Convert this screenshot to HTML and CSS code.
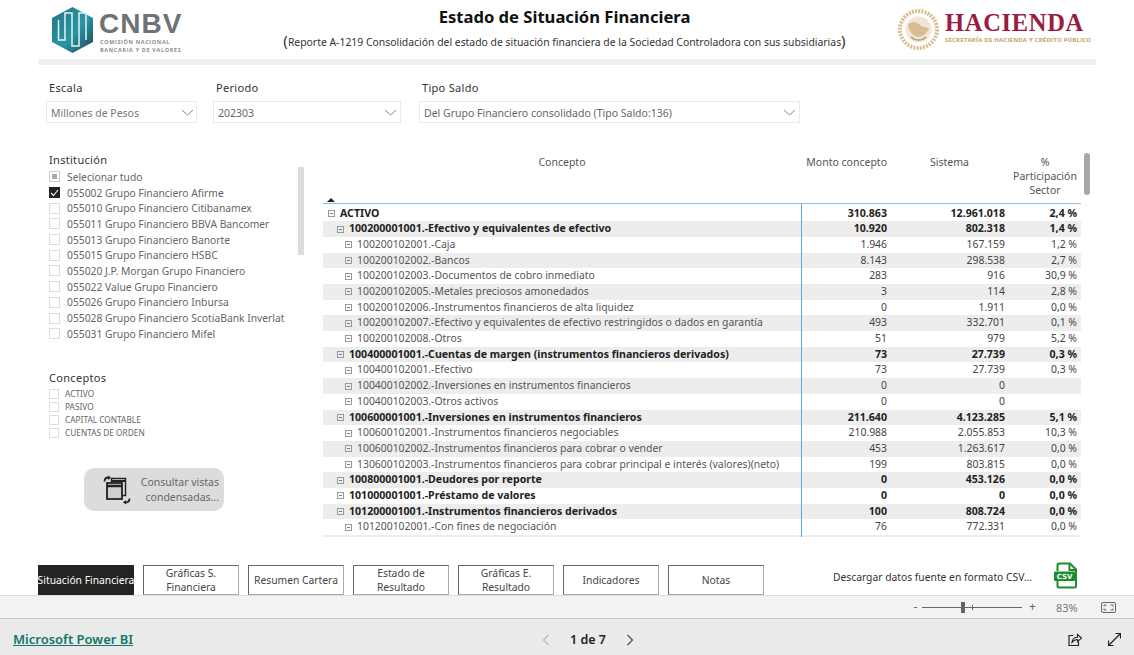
FILE: index.html
```html
<!DOCTYPE html>
<html lang="es">
<head>
<meta charset="utf-8">
<title>Estado de Situación Financiera</title>
<link rel="stylesheet" href="styles.css">
</head>
<body>
<div class="report">
  <header class="header">
    <div class="cnbv">
      <svg class="cnbv-mark" width="41" height="46" viewBox="0 0 41 46">
        <defs><linearGradient id="tg" x1="0" y1="0" x2="1" y2="1"><stop offset="0" stop-color="#23737f"/><stop offset="0.55" stop-color="#2a96a5"/><stop offset="1" stop-color="#1b4555"/></linearGradient></defs>
        <path d="M20.500 0 41 11V35L20.500 46 0 35V11Z" fill="url(#tg)"/>
        <path d="M6.500 13V33H13V6H20V39H27V6H34V33" fill="none" stroke="#e6f3f5" stroke-width="1.500"/>
      </svg>
      <div class="cnbv-text">
        <div class="cnbv-name">CNBV</div>
        <div class="cnbv-sub">COMISIÓN NACIONAL<br>BANCARIA Y DE VALORES</div>
      </div>
    </div>
    <div class="title-block">
      <h1 class="title">Estado de Situación Financiera</h1>
      <p class="subtitle"><span class="paren">(</span>Reporte A-1219 Consolidación del estado de situación financiera de la Sociedad Controladora con sus subsidiarias<span class="paren">)</span></p>
    </div>
    <div class="hacienda">
      <svg width="41" height="41" viewBox="0 0 41 41">
        <circle cx="20.500" cy="20.500" r="18.500" fill="none" stroke="#d9bd92" stroke-width="4" stroke-dasharray="2 1.200"/>
        <circle cx="20.500" cy="20.500" r="13" fill="#f1e6d4"/>
        <path d="M10 16c4-5 9-3 12 0s7 1 9 4c-3 5-7 8-11 8s-9-5-10-12Z" fill="#d9bd92"/>
        <path d="M13 28c4 4 11 4 15 0" fill="none" stroke="#b9a070" stroke-width="1.500"/>
      </svg>
      <div class="hac-text">
        <div class="hac-name">HACIENDA</div>
        <div class="hac-sub">SECRETARÍA DE HACIENDA Y CRÉDITO PÚBLICO</div>
      </div>
    </div>
  </header>
  <div class="rule"></div>

  <section class="slicers">
    <div class="slicer s-escala">
      <label class="slabel">Escala</label>
      <div class="dropdown"><span>Millones de Pesos</span><svg class="chev" width="13" height="7" viewBox="0 0 13 7"><path d="M1 1l5.500 5L12 1" fill="none" stroke="#888" stroke-width="1"/></svg></div>
    </div>
    <div class="slicer s-periodo">
      <label class="slabel">Periodo</label>
      <div class="dropdown dark"><span>202303</span><svg class="chev" width="13" height="7" viewBox="0 0 13 7"><path d="M1 1l5.500 5L12 1" fill="none" stroke="#888" stroke-width="1"/></svg></div>
    </div>
    <div class="slicer s-tipo">
      <label class="slabel">Tipo Saldo</label>
      <div class="dropdown dark"><span>Del Grupo Financiero consolidado (Tipo Saldo:136)</span><svg class="chev" width="13" height="7" viewBox="0 0 13 7"><path d="M1 1l5.500 5L12 1" fill="none" stroke="#888" stroke-width="1"/></svg></div>
    </div>
  </section>

  <main class="main">
    <aside class="side">
      <div class="inst">
        <div class="slabel">Institución</div>
        <ul class="checks">
          <li><span class="box partial"></span>Selecionar tudo</li>
          <li><span class="box checked"><svg width="11" height="11" viewBox="0 0 11 11"><path d="M2 6l2.500 2.500L9 3" fill="none" stroke="#fff" stroke-width="1.100"/></svg></span>055002 Grupo Financiero Afirme</li>
          <li><span class="box"></span>055010 Grupo Financiero Citibanamex</li>
          <li><span class="box"></span>055011 Grupo Financiero BBVA Bancomer</li>
          <li><span class="box"></span>055013 Grupo Financiero Banorte</li>
          <li><span class="box"></span>055015 Grupo Financiero HSBC</li>
          <li><span class="box"></span>055020 J.P. Morgan Grupo Financiero</li>
          <li><span class="box"></span>055022 Value Grupo Financiero</li>
          <li><span class="box"></span>055026 Grupo Financiero Inbursa</li>
          <li><span class="box"></span>055028 Grupo Financiero ScotiaBank Inverlat</li>
          <li><span class="box"></span>055031 Grupo Financiero Mifel</li>
        </ul>
        <div class="side-scroll"></div>
      </div>
      <div class="conceptos">
        <div class="slabel">Conceptos</div>
        <ul class="checks small">
          <li><span class="box"></span>ACTIVO</li>
          <li><span class="box"></span>PASIVO</li>
          <li><span class="box"></span>CAPITAL CONTABLE</li>
          <li><span class="box"></span>CUENTAS DE ORDEN</li>
        </ul>
      </div>
      <button class="consult">
        <svg width="32" height="32" viewBox="0 0 32 32">
          <path d="M7.500 3.500C5 3.500 3.500 5 3.500 7.500" fill="none" stroke="#222" stroke-width="1.800"/>
          <path d="M7 1.500v4.500l3-2.200Z" fill="#222"/>
          <path d="M24.500 28.500c2.500 0 4-1.500 4-4" fill="none" stroke="#222" stroke-width="1.800"/>
          <path d="M25 30.500V26l-3 2.200Z" fill="#222"/>
          <rect x="10.500" y="4.500" width="14" height="17" fill="#ddd" stroke="#222" stroke-width="1.500"/>
          <path d="M10.500 7h14" stroke="#222" stroke-width="2"/>
          <rect x="6" y="9" width="15" height="16" fill="#cfcfcf" stroke="#222" stroke-width="1.800"/>
          <path d="M6 12h15" stroke="#222" stroke-width="2.500"/>
        </svg>
        <span>Consultar vistas<br>condensadas...</span>
      </button>
    </aside>

    <div class="matrix">
      <div class="mhead">
        <div class="h-concept">Concepto</div>
        <div class="h-num h-monto">Monto concepto</div>
        <div class="h-num h-sistema">Sistema</div>
        <div class="h-num h-pct">%<br>Participación<br>Sector</div>
        <svg class="sort" width="8" height="4" viewBox="0 0 8 4"><path d="M4 0l4 4H0Z" fill="#222"/></svg>
      </div>
      <div class="mbody">
        <div class="row b l0"><span class="c"><i class="tg"></i>ACTIVO</span><span>310.863</span><span>12.961.018</span><span>2,4 %</span></div>
        <div class="row b l1 z"><span class="c"><i class="tg"></i>100200001001.-Efectivo y equivalentes de efectivo</span><span>10.920</span><span>802.318</span><span>1,4 %</span></div>
        <div class="row l2"><span class="c"><i class="tg"></i>100200102001.-Caja</span><span>1.946</span><span>167.159</span><span>1,2 %</span></div>
        <div class="row l2 z"><span class="c"><i class="tg"></i>100200102002.-Bancos</span><span>8.143</span><span>298.538</span><span>2,7 %</span></div>
        <div class="row l2"><span class="c"><i class="tg"></i>100200102003.-Documentos de cobro inmediato</span><span>283</span><span>916</span><span>30,9 %</span></div>
        <div class="row l2 z"><span class="c"><i class="tg"></i>100200102005.-Metales preciosos amonedados</span><span>3</span><span>114</span><span>2,8 %</span></div>
        <div class="row l2"><span class="c"><i class="tg"></i>100200102006.-Instrumentos financieros de alta liquidez</span><span>0</span><span>1.911</span><span>0,0 %</span></div>
        <div class="row l2 z"><span class="c"><i class="tg"></i>100200102007.-Efectivo y equivalentes de efectivo restringidos o dados en garantía</span><span>493</span><span>332.701</span><span>0,1 %</span></div>
        <div class="row l2"><span class="c"><i class="tg"></i>100200102008.-Otros</span><span>51</span><span>979</span><span>5,2 %</span></div>
        <div class="row b l1 z"><span class="c"><i class="tg"></i>100400001001.-Cuentas de margen (instrumentos financieros derivados)</span><span>73</span><span>27.739</span><span>0,3 %</span></div>
        <div class="row l2"><span class="c"><i class="tg"></i>100400102001.-Efectivo</span><span>73</span><span>27.739</span><span>0,3 %</span></div>
        <div class="row l2 z"><span class="c"><i class="tg"></i>100400102002.-Inversiones en instrumentos financieros</span><span>0</span><span>0</span><span></span></div>
        <div class="row l2"><span class="c"><i class="tg"></i>100400102003.-Otros activos</span><span>0</span><span>0</span><span></span></div>
        <div class="row b l1 z"><span class="c"><i class="tg"></i>100600001001.-Inversiones en instrumentos financieros</span><span>211.640</span><span>4.123.285</span><span>5,1 %</span></div>
        <div class="row l2"><span class="c"><i class="tg"></i>100600102001.-Instrumentos financieros negociables</span><span>210.988</span><span>2.055.853</span><span>10,3 %</span></div>
        <div class="row l2 z"><span class="c"><i class="tg"></i>100600102002.-Instrumentos financieros para cobrar o vender</span><span>453</span><span>1.263.617</span><span>0,0 %</span></div>
        <div class="row l2"><span class="c"><i class="tg"></i>130600102003.-Instrumentos financieros para cobrar principal e interés (valores)(neto)</span><span>199</span><span>803.815</span><span>0,0 %</span></div>
        <div class="row b l1 z"><span class="c"><i class="tg"></i>100800001001.-Deudores por reporte</span><span>0</span><span>453.126</span><span>0,0 %</span></div>
        <div class="row b l1"><span class="c"><i class="tg"></i>101000001001.-Préstamo de valores</span><span>0</span><span>0</span><span>0,0 %</span></div>
        <div class="row b l1 z"><span class="c"><i class="tg"></i>101200001001.-Instrumentos financieros derivados</span><span>100</span><span>808.724</span><span>0,0 %</span></div>
        <div class="row l2"><span class="c"><i class="tg"></i>101200102001.-Con fines de negociación</span><span>76</span><span>772.331</span><span>0,0 %</span></div>
        <div class="row-cut"></div>
        <div class="vline"></div>
      </div>
      <div class="matrix-scroll"></div>
    </div>
  </main>

  <nav class="tabs">
    <a class="tab active">Situación Financiera</a>
    <a class="tab">Gráficas S. Financiera</a>
    <a class="tab">Resumen Cartera</a>
    <a class="tab">Estado de Resultado</a>
    <a class="tab">Gráficas E. Resultado</a>
    <a class="tab">Indicadores</a>
    <a class="tab">Notas</a>
    <span class="download">Descargar datos fuente en formato CSV...</span>
    <svg class="csv" width="25" height="27" viewBox="0 0 25 27">
      <path d="M4.500 9V3a1.500 1.500 0 0 1 1.500-1.500h11l6 6V24a1.500 1.500 0 0 1-1.500 1.500H6A1.500 1.500 0 0 1 4.500 24V19" fill="#fff" stroke="#1e8c2e" stroke-width="2"/>
      <path d="M16.500 1.500V8h6.500" fill="none" stroke="#1e8c2e" stroke-width="2"/>
      <rect x="1" y="9.500" width="21" height="9.500" rx="1" fill="#1e8c2e"/>
      <text x="11.500" y="17.300" class="csv-t">CSV</text>
    </svg>
  </nav>
</div>

<div class="zoombar">
  <span class="zbtn">-</span>
  <div class="slider"><i class="notch"></i><i class="thumb"></i></div>
  <span class="zbtn">+</span>
  <span class="zpct">83%</span>
  <svg class="fit" width="15" height="11" viewBox="0 0 15 11"><rect x="0.500" y="0.500" width="14" height="10" rx="1.500" fill="none" stroke="#666"/><path d="M3 4.500V3h2.500M12 4.500V3H9.500M3 6.500V8h2.500M12 6.500V8H9.500" fill="none" stroke="#666"/></svg>
</div>

<footer class="footer">
  <a class="pbi">Microsoft Power BI</a>
  <div class="pager">
    <svg width="8" height="12" viewBox="0 0 8 12"><path d="M6.500 1 1.500 6l5 5" fill="none" stroke="#bbb" stroke-width="1.300"/></svg>
    <span class="pages">1 de 7</span>
    <svg width="8" height="12" viewBox="0 0 8 12"><path d="M1.500 1l5 5-5 5" fill="none" stroke="#555" stroke-width="1.300"/></svg>
  </div>
  <div class="actions">
    <svg width="14" height="13" viewBox="0 0 14 13"><path d="M5 2.500H1v10h9.500V8.500" fill="none" stroke="#222" stroke-width="1.200"/><path d="M4 9.500c0-4 3-5.300 5.500-5.300V1.500l4 3.600-4 3.500V6.500C7.500 6.500 5.500 7.500 4 9.500Z" fill="none" stroke="#222" stroke-width="1.100"/></svg>
    <svg width="13" height="13" viewBox="0 0 13 13"><path d="M.5 12.500l12-12M7.500.5h5v5M.5 7.500v5h5" fill="none" stroke="#222" stroke-width="1.200"/></svg>
  </div>
</footer>
</body>
</html>
```

FILE: styles.css
```css
* { box-sizing: border-box; }
html, body { margin: 0; padding: 0; }
body {
  width: 1134px; height: 655px; overflow: hidden; background: #fff;
  font-family: "Noto Sans", "Open Sans", sans-serif; color: #555;
  display: flex; flex-direction: column;
}
.report { height: 595px; padding: 0 38px; display: flex; flex-direction: column; flex: none; }

.header { height: 59px; display: flex; flex: none; position: relative; }
.cnbv { width: 180px; padding: 7px 0 0 14px; display: flex; gap: 7px; flex: none; }
.cnbv-text { padding-top: 3px; }
.cnbv-name { font: 800 28px/27px "Liberation Sans", sans-serif; font-weight: 700; color: #707274; letter-spacing: 1px; margin-left: -1px; }
.cnbv-sub { font: 700 5.400px/7.500px "Open Sans", sans-serif; color: #8a8c8e; margin-top: 2px; letter-spacing: 0.7px; white-space: nowrap; }
.title-block { flex: 1; text-align: center; padding: 6px 0 0 13px; }
.title { margin: 0; font: 700 16.600px/22px "Noto Sans", sans-serif; color: #111; }
.subtitle { margin: 2px 0 0; font: 400 10.400px/20px "Noto Sans", sans-serif; color: #333; white-space: nowrap; }
.paren { font-size: 15px; color: #333; }
.hacienda { width: 198px; display: flex; gap: 6px; padding: 9px 0 0 0; flex: none; }
.hac-name { font: 700 24.500px/24px "Liberation Serif", serif; color: #9b1b42; letter-spacing: 0.7px; margin-top: 2px; white-space: nowrap; }
.hac-sub { font: 700 6px/7px "Open Sans", sans-serif; color: #c5a06a; letter-spacing: 0.2px; white-space: nowrap; margin-top: 2px; }
.rule { height: 6px; background: #efefef; flex: none; width: 1058px; }

.slicers { display: flex; height: 88px; padding-top: 15px; flex: none; }
.slicer { display: flex; flex-direction: column; }
.s-escala { margin-left: 8px; width: 151px; }
.s-periodo { margin-left: 16px; width: 188px; }
.s-tipo { margin-left: 18px; width: 381px; }
.slabel { font: 400 11px/16px "Noto Sans", sans-serif; color: #333; letter-spacing: 0.3px; padding-left: 3px; height: 16px; }
.dropdown { margin-top: 5px; height: 22px; border: 1px solid #eaeaea; display: flex; align-items: center; justify-content: space-between; padding: 1px 2px 0 4px; font-size: 10.500px; color: #777; }
.dropdown.dark { color: #666; padding-right: 3px; }

.main { display: flex; height: 385px; flex: none; }
.side { width: 285px; flex: none; display: flex; flex-direction: column; padding-left: 11px; }
.inst { position: relative; height: 198px; }
.inst .slabel { padding-left: 0; margin-top: -1px; }
.checks { list-style: none; margin: 1px 0 0; padding: 0; }
.checks li { display: flex; align-items: center; height: 15.700px; font-size: 10.300px; color: #666; white-space: nowrap; gap: 7px; }
.box { width: 11px; height: 11px; border: 1px solid #ddd; flex: none; display: flex; align-items: center; justify-content: center; background: #fff; }
.box.partial { border-color: #ccc; }
.box.partial::after { content: ""; width: 5px; height: 5px; background: #aaa; }
.box.checked { background: #222; border-color: #222; }
.box.checked svg { flex: none; }
.side-scroll { position: absolute; left: 249px; top: 14px; width: 6px; height: 88px; background: #dcdcdc; }
.conceptos { margin-top: 19px; }
.conceptos .slabel { padding-left: 0; }
.checks.small { margin-top: 1px; }
.checks.small li { height: 13px; font-size: 8.300px; gap: 6px; color: #666; }
.checks.small .box { width: 10px; height: 10px; }
.consult { margin: 29px 0 0 35px; width: 140px; height: 43px; border: 0; border-radius: 10px; background: #dcdcdc; display: flex; align-items: center; padding: 0 5px 0 17px; font: 400 10.500px/14.500px "Noto Sans", sans-serif; color: #666; text-align: right; }
.consult span { flex: 1; white-space: nowrap; }

.matrix { position: relative; width: 773px; flex: none; }
.mhead { position: relative; height: 51px; border-bottom: 1px solid #8cc0ec; display: flex; width: 758px; font-size: 10.500px; color: #555; line-height: 14px; }
.h-concept { width: 478px; text-align: center; padding: 2px 0 0 0; }
.h-num { text-align: right; padding-top: 2px; }
.h-monto { width: 86px; padding-right: 0; white-space: nowrap; }
.h-sistema { width: 82px; text-align: right; }
.h-pct { width: 110px; flex: none; padding-right: 1px; text-align: center; padding-left: 43px; }
.sort { position: absolute; left: 4px; bottom: 1px; }
.mbody { position: relative; width: 758px; padding-top: 1.600px; height: 334px; overflow: hidden; }
.row { display: grid; grid-template-columns: 478px 86px 118px 72px; height: 15.700px; line-height: 15.700px; font-size: 10.400px; color: #444; white-space: nowrap; }
.row > span:not(.c) { text-align: right; }
.row.z { background: #ededed; }
.row.b { font-weight: 700; color: #222; font-size: 10.600px; }
.row-cut { height: 2px; background: #ededed; }
.c { display: flex; align-items: center; overflow: hidden; }
.l0 .c { padding-left: 5px; }
.l1 .c { padding-left: 14px; }
.l2 .c { padding-left: 22px; color: #555; }
.tg { width: 7px; height: 7px; border: 1px solid #999; margin-right: 5px; flex: none; position: relative; display: block; }
.tg::after { content: ""; position: absolute; left: 1px; top: 2px; width: 3px; height: 1px; background: #777; }
.vline { position: absolute; left: 478px; top: 0; height: 333px; width: 1px; background: #5aa5ea; }
.matrix-scroll { position: absolute; left: 761px; top: 0; width: 6px; height: 42px; border-radius: 3px; background: #a8a8a8; }

.tabs { display: flex; align-items: flex-start; height: 30px; margin-top: 27px; flex: none; }
.tab { width: 96px; height: 30px; border: 1px solid #666; border-right-color: #aaa; border-bottom-color: #aaa; margin-right: 9px; display: flex; align-items: center; justify-content: center; text-align: center; font-size: 10.300px; line-height: 14px; color: #444; padding: 0 5px; flex: none; }
.tab:nth-child(2), .tab:nth-child(4), .tab:nth-child(5) { padding: 0 14px; }
.tab.active { background: #252423; color: #fff; border: 0; padding: 0; white-space: nowrap; }
.download { font-size: 10.300px; color: #333; margin-left: 60px; line-height: 24px; white-space: nowrap; flex: none; }
.csv { margin: -3px 0 0 21px; flex: none; }
.csv-t { font: 700 7px "DejaVu Sans", sans-serif; fill: #fff; text-anchor: middle; }

.zoombar { height: 24px; flex: none; background: #f3f3f3; border-top: 1px solid #ddd; border-bottom: 1px solid #c9c9c9; display: flex; align-items: center; padding-left: 912px; color: #666; font-size: 11px; }
.zbtn { width: 7px; text-align: center; font-size: 12px; line-height: 12px; }
.slider { position: relative; width: 100px; height: 1px; background: #666; margin: 0 7px 0 3px; }
.thumb { position: absolute; left: 39px; top: -5px; width: 4px; height: 11px; background: #666; }
.notch { position: absolute; left: 50px; top: -2px; width: 1px; height: 5px; background: #666; }
.zpct { margin-left: 20px; width: 24px; font-size: 11px; color: #777; }
.fit { margin-left: 21px; }

.footer { flex: 1; background: #eaeaea; display: flex; align-items: center; position: relative; padding: 3px 0 0 13px; }
.pbi { font: 600 13px/16px "Noto Sans", sans-serif; color: #117865; text-decoration: underline; }
.pager { position: absolute; left: 542px; top: 14px; display: flex; align-items: center; }
.pages { font: 600 12.500px/14px "Noto Sans", sans-serif; color: #222; margin: 0 20px 0 20px; white-space: nowrap; }
.actions { position: absolute; left: 1068px; top: 14px; display: flex; gap: 26px; }
```
